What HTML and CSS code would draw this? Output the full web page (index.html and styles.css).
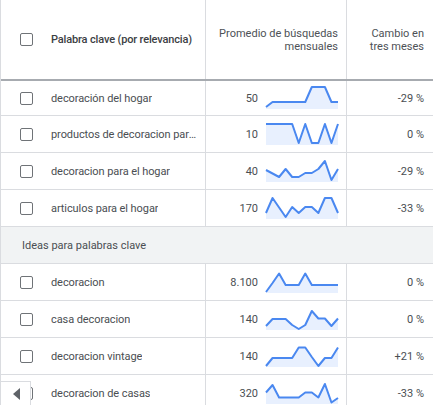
FILE: index.html
```html
<!DOCTYPE html>
<html>
<head>
  <title>Ideas para palabras clave</title>
  <link rel="stylesheet" href="styles.css">
</head>
<body>
  <div class="kw-table">
    <div class="kw-head">
      <div class="cell col-kw"><span class="check"></span><span class="head-main">Palabra clave (por relevancia)</span></div>
      <div class="cell col-avg"><span class="head-sub">Promedio de búsquedas<br>mensuales</span></div>
      <div class="cell col-change"><span class="head-sub">Cambio en<br>tres meses</span></div>
    </div>

    <div class="kw-row first">
      <div class="cell col-kw"><span class="check"></span><span class="kw">decoración del hogar</span></div>
      <div class="cell col-avg"><span class="num">50</span><span class="spark" data-points="21,16,16,16,16,16,16,1,1,1,16,16"></span></div>
      <div class="cell col-change">-29 %</div>
    </div>
    <div class="kw-row">
      <div class="cell col-kw"><span class="check"></span><span class="kw">productos de decoracion para el hogar</span></div>
      <div class="cell col-avg"><span class="num">10</span><span class="spark" data-points="2,2,2,2,2,21,2,21,21,2,21,2"></span></div>
      <div class="cell col-change">0 %</div>
    </div>
    <div class="kw-row">
      <div class="cell col-kw"><span class="check"></span><span class="kw">decoracion para el hogar</span></div>
      <div class="cell col-avg"><span class="num">40</span><span class="spark" data-points="11,14.5,18,10,18,18,14,14,10,2,21,10"></span></div>
      <div class="cell col-change">-29 %</div>
    </div>
    <div class="kw-row">
      <div class="cell col-kw"><span class="check"></span><span class="kw">articulos para el hogar</span></div>
      <div class="cell col-avg"><span class="num">170</span><span class="spark" data-points="17,2,11.5,21,11,17,11,11,17,2,2,17"></span></div>
      <div class="cell col-change">-33 %</div>
    </div>

    <div class="kw-section">Ideas para palabras clave</div>

    <div class="kw-row">
      <div class="cell col-kw"><span class="check"></span><span class="kw">decoracion</span></div>
      <div class="cell col-avg"><span class="num">8.100</span><span class="spark" data-points="22,13,3.5,15,15,15,3.5,15,15,15,15,15"></span></div>
      <div class="cell col-change">0 %</div>
    </div>
    <div class="kw-row">
      <div class="cell col-kw"><span class="check"></span><span class="kw">casa decoracion</span></div>
      <div class="cell col-avg"><span class="num">140</span><span class="spark" data-points="19,12,12,12,18,22,18,4,11.5,11.5,19,11.5"></span></div>
      <div class="cell col-change">0 %</div>
    </div>
    <div class="kw-row">
      <div class="cell col-kw"><span class="check"></span><span class="kw">decoracion vintage</span></div>
      <div class="cell col-avg"><span class="num">140</span><span class="spark" data-points="22,14,14,14,14,3.5,3.5,13,22,14,14,3.5"></span></div>
      <div class="cell col-change">+21 %</div>
    </div>
    <div class="kw-row">
      <div class="cell col-kw"><span class="check"></span><span class="kw">decoracion de casas</span></div>
      <div class="cell col-avg"><span class="num">320</span><span class="spark" data-points="11.5,4,16.5,16.5,16.5,16.5,11.5,11.5,16.5,3,21.5,17"></span></div>
      <div class="cell col-change">-33 %</div>
    </div>
  </div>

  <div class="scroll-left">
    <svg width="7" height="12" viewBox="0 0 7 12"><polygon points="7,0 7,12 0,6" fill="#5f6368"/></svg>
  </div>

  <script>
    // draw the trend sparklines from their monthly points
    const sparks = document.querySelectorAll('.spark');
    sparks.forEach(spark => {
      const ys = spark.getAttribute('data-points').split(',').map(Number);
      const step = 72 / (ys.length - 1);
      const pts = ys.map((y, i) => (i * step).toFixed(2) + ',' + y).join(' ');
      spark.innerHTML =
        '<svg width="72" height="24" viewBox="0 0 72 24">' +
        '<polygon points="' + pts + ' 72,23 0,23" fill="#e8f0fe"/>' +
        '<polyline points="' + pts + '" fill="none" stroke="#4a88f0" stroke-width="2" stroke-linejoin="round"/>' +
        '</svg>';
    });
  </script>
</body>
</html>
```

FILE: styles.css
```css
body {
  margin: 0;
  font-family: Roboto, "Noto Sans", Arial, sans-serif;
  font-size: 11px;
  color: #4a4e52;
  background: #fff;
  overflow: hidden;
}

.kw-table {
  border-left: 1px solid #dadce0;
  width: 432px;
}

.kw-head,
.kw-row {
  display: grid;
  grid-template-columns: 205px 141px 1fr;
}

.kw-head {
  height: 79px;
  border-bottom: 2px solid #a7abb0;
}

.kw-row {
  height: 36px;
  border-bottom: 1px solid #dadce0;
}

.kw-row.first {
  height: 34px;
}

.cell {
  display: flex;
  align-items: center;
  min-width: 0;
}

.col-kw {
  padding: 0 9px 0 19px;
  border-right: 1px solid #dadce0;
}

.col-avg {
  justify-content: flex-end;
  gap: 8px;
  padding-right: 8px;
  border-right: 1px solid #dadce0;
}

.col-change {
  justify-content: flex-end;
  padding-right: 9px;
}

.check {
  flex: none;
  width: 11px;
  height: 11px;
  border: 1.5px solid #6f7377;
  border-radius: 2px;
  margin-right: 18px;
}

.kw {
  white-space: nowrap;
  overflow: hidden;
  text-overflow: ellipsis;
  letter-spacing: -0.08px;
}

.head-main {
  font-weight: 500;
  color: #3c4043;
  white-space: nowrap;
  letter-spacing: -0.15px;
}

.head-sub {
  text-align: right;
  line-height: 13px;
  color: #4d5156;
}

.spark {
  display: block;
  width: 72px;
  height: 24px;
}

.spark svg {
  display: block;
  overflow: visible;
}

.kw-section {
  height: 36px;
  display: flex;
  align-items: center;
  padding-left: 21px;
  background: #f1f3f4;
  border-bottom: 1px solid #dadce0;
}

.scroll-left {
  position: absolute;
  left: 0;
  top: 381px;
  width: 31px;
  height: 30px;
  background: #fff;
  border: 1px solid #dadce0;
  box-sizing: border-box;
  display: flex;
  justify-content: center;
  padding-top: 6px;
}

.scroll-left svg {
  margin-left: 1px;
}
```
